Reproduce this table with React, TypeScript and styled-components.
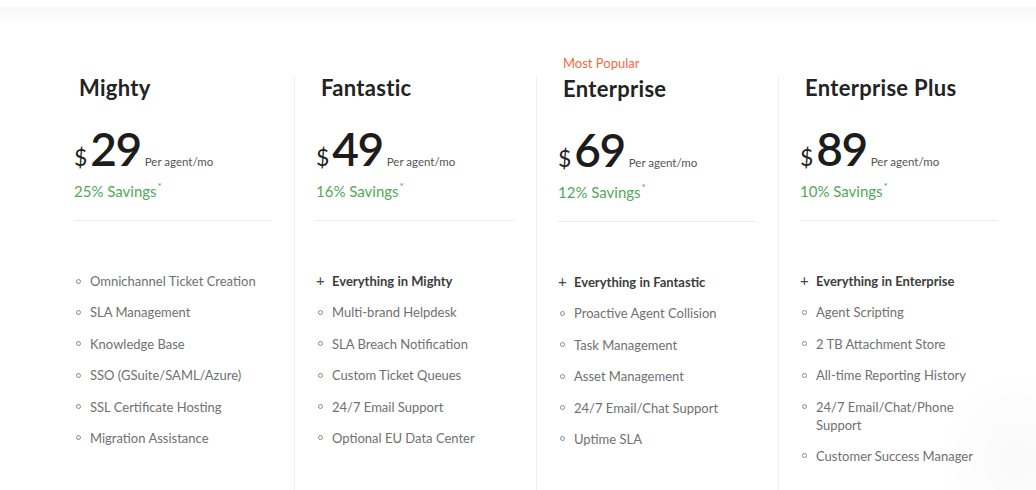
import React from "react";
import styled, { createGlobalStyle } from "styled-components";

const Global = createGlobalStyle`
  html, body { margin: 0; padding: 0; background: #fff; }
  body { font-family: Lato, "Open Sans", Arial, sans-serif; color: #222; }
`;

const TopShade = styled.div`
  height: 18px;
  margin-top: 7px;
  background: linear-gradient(#f8f8f8, #ffffff);
`;

const Grid = styled.div`
  display: grid;
  grid-template-columns: repeat(4, 242px);
  margin: 51px 0 0 52px;
  position: relative;
`;

const Column = styled.section<{ $divider?: boolean; $shift?: number }>`
  position: relative;
  display: flex;
  flex-direction: column;
  padding: ${(p) => p.$shift ?? 0}px 22px 0 21px;
  min-height: 420px;
  border-left: ${(p) => (p.$divider ? "1px solid #f0f0f0" : "1px solid transparent")};
`;

const Badge = styled.div`
  position: absolute;
  top: -20px;
  left: 26px;
  font-size: 13px;
  line-height: 14px;
  color: #f7693f;
`;

const Title = styled.h2`
  margin: 0;
  padding-left: 5px;
  font-size: 22px;
  line-height: 24px;
  font-weight: 700;
  color: #232323;
  letter-spacing: 0.3px;
`;

const PriceRow = styled.div`
  display: flex;
  align-items: baseline;
  margin-top: 26px;
  height: 46px;
`;

const Dollar = styled.span`
  font-size: 23px;
  color: #222;
  margin-right: 3px;
`;

const Amount = styled.span`
  font-size: 46px;
  line-height: 46px;
  font-weight: 600;
  letter-spacing: -1.5px;
  color: #1c1c1c;
`;

const Per = styled.span`
  font-size: 11.5px;
  color: #555;
  margin-left: 4px;
`;

const Savings = styled.div`
  margin-top: 9px;
  font-size: 15px;
  line-height: 20px;
  color: #52a857;
  sup {
    font-size: 10px;
    vertical-align: top;
    line-height: 10px;
    margin-left: 1px;
  }
`;

const Rule = styled.hr`
  margin: 19px 0 0 0;
  border: none;
  border-top: 1px solid #ececec;
  height: 0;
`;

const Features = styled.ul`
  list-style: none;
  margin: 51px 0 0 0;
  padding: 0;
  display: flex;
  flex-direction: column;
  gap: 13.4px;
`;

const Feature = styled.li<{ $plus?: boolean }>`
  position: relative;
  padding-left: 16px;
  font-size: 13px;
  line-height: 18px;
  color: ${(p) => (p.$plus ? "#3d3d3d" : "#707070")};
  font-weight: ${(p) => (p.$plus ? 700 : 400)};
`;

const Ring = styled.span`
  position: absolute;
  left: 2px;
  top: 6.5px;
  width: 3px;
  height: 3px;
  border: 1.3px solid #8a8a8a;
  border-radius: 50%;
`;

const Plus = styled.span`
  position: absolute;
  left: 0;
  top: 0;
  font-weight: 400;
  font-size: 15px;
  line-height: 17px;
  color: #444;
`;

const Glow = styled.div`
  position: fixed;
  right: -60px;
  bottom: -60px;
  width: 160px;
  height: 180px;
  border-radius: 50%;
  background: radial-gradient(closest-side, rgba(0,0,0,0.025), rgba(0,0,0,0));
  pointer-events: none;
`;

type Plan = {
  name: string;
  price: string;
  savings: string;
  popular?: boolean;
  plus?: string;
  items: string[];
};

const plans: Plan[] = [
  {
    name: "Mighty",
    price: "29",
    savings: "25% Savings",
    items: [
      "Omnichannel Ticket Creation",
      "SLA Management",
      "Knowledge Base",
      "SSO (GSuite/SAML/Azure)",
      "SSL Certificate Hosting",
      "Migration Assistance",
    ],
  },
  {
    name: "Fantastic",
    price: "49",
    savings: "16% Savings",
    plus: "Everything in Mighty",
    items: [
      "Multi-brand Helpdesk",
      "SLA Breach Notification",
      "Custom Ticket Queues",
      "24/7 Email Support",
      "Optional EU Data Center",
    ],
  },
  {
    name: "Enterprise",
    price: "69",
    savings: "12% Savings",
    popular: true,
    plus: "Everything in Fantastic",
    items: [
      "Proactive Agent Collision",
      "Task Management",
      "Asset Management",
      "24/7 Email/Chat Support",
      "Uptime SLA",
    ],
  },
  {
    name: "Enterprise Plus",
    price: "89",
    savings: "10% Savings",
    plus: "Everything in Enterprise",
    items: [
      "Agent Scripting",
      "2 TB Attachment Store",
      "All-time Reporting History",
      "24/7 Email/Chat/Phone Support",
      "Customer Success Manager",
    ],
  },
];

export default function App() {
  return (
    <>
      <Global />
      <TopShade />
      <Grid>
        {plans.map((p, i) => (
          <Column key={p.name} $divider={i > 0} $shift={p.popular ? 1 : 0}>
            {p.popular && <Badge>Most Popular</Badge>}
            <Title>{p.name}</Title>
            <PriceRow>
              <Dollar>$</Dollar>
              <Amount>{p.price}</Amount>
              <Per>Per agent/mo</Per>
            </PriceRow>
            <Savings>
              {p.savings}
              <sup>*</sup>
            </Savings>
            <Rule />
            <Features>
              {p.plus && (
                <Feature $plus>
                  <Plus>+</Plus>
                  {p.plus}
                </Feature>
              )}
              {p.items.map((it) => (
                <Feature key={it}>
                  <Ring />
                  {it}
                </Feature>
              ))}
            </Features>
          </Column>
        ))}
      </Grid>
      <Glow />
    </>
  );
}
